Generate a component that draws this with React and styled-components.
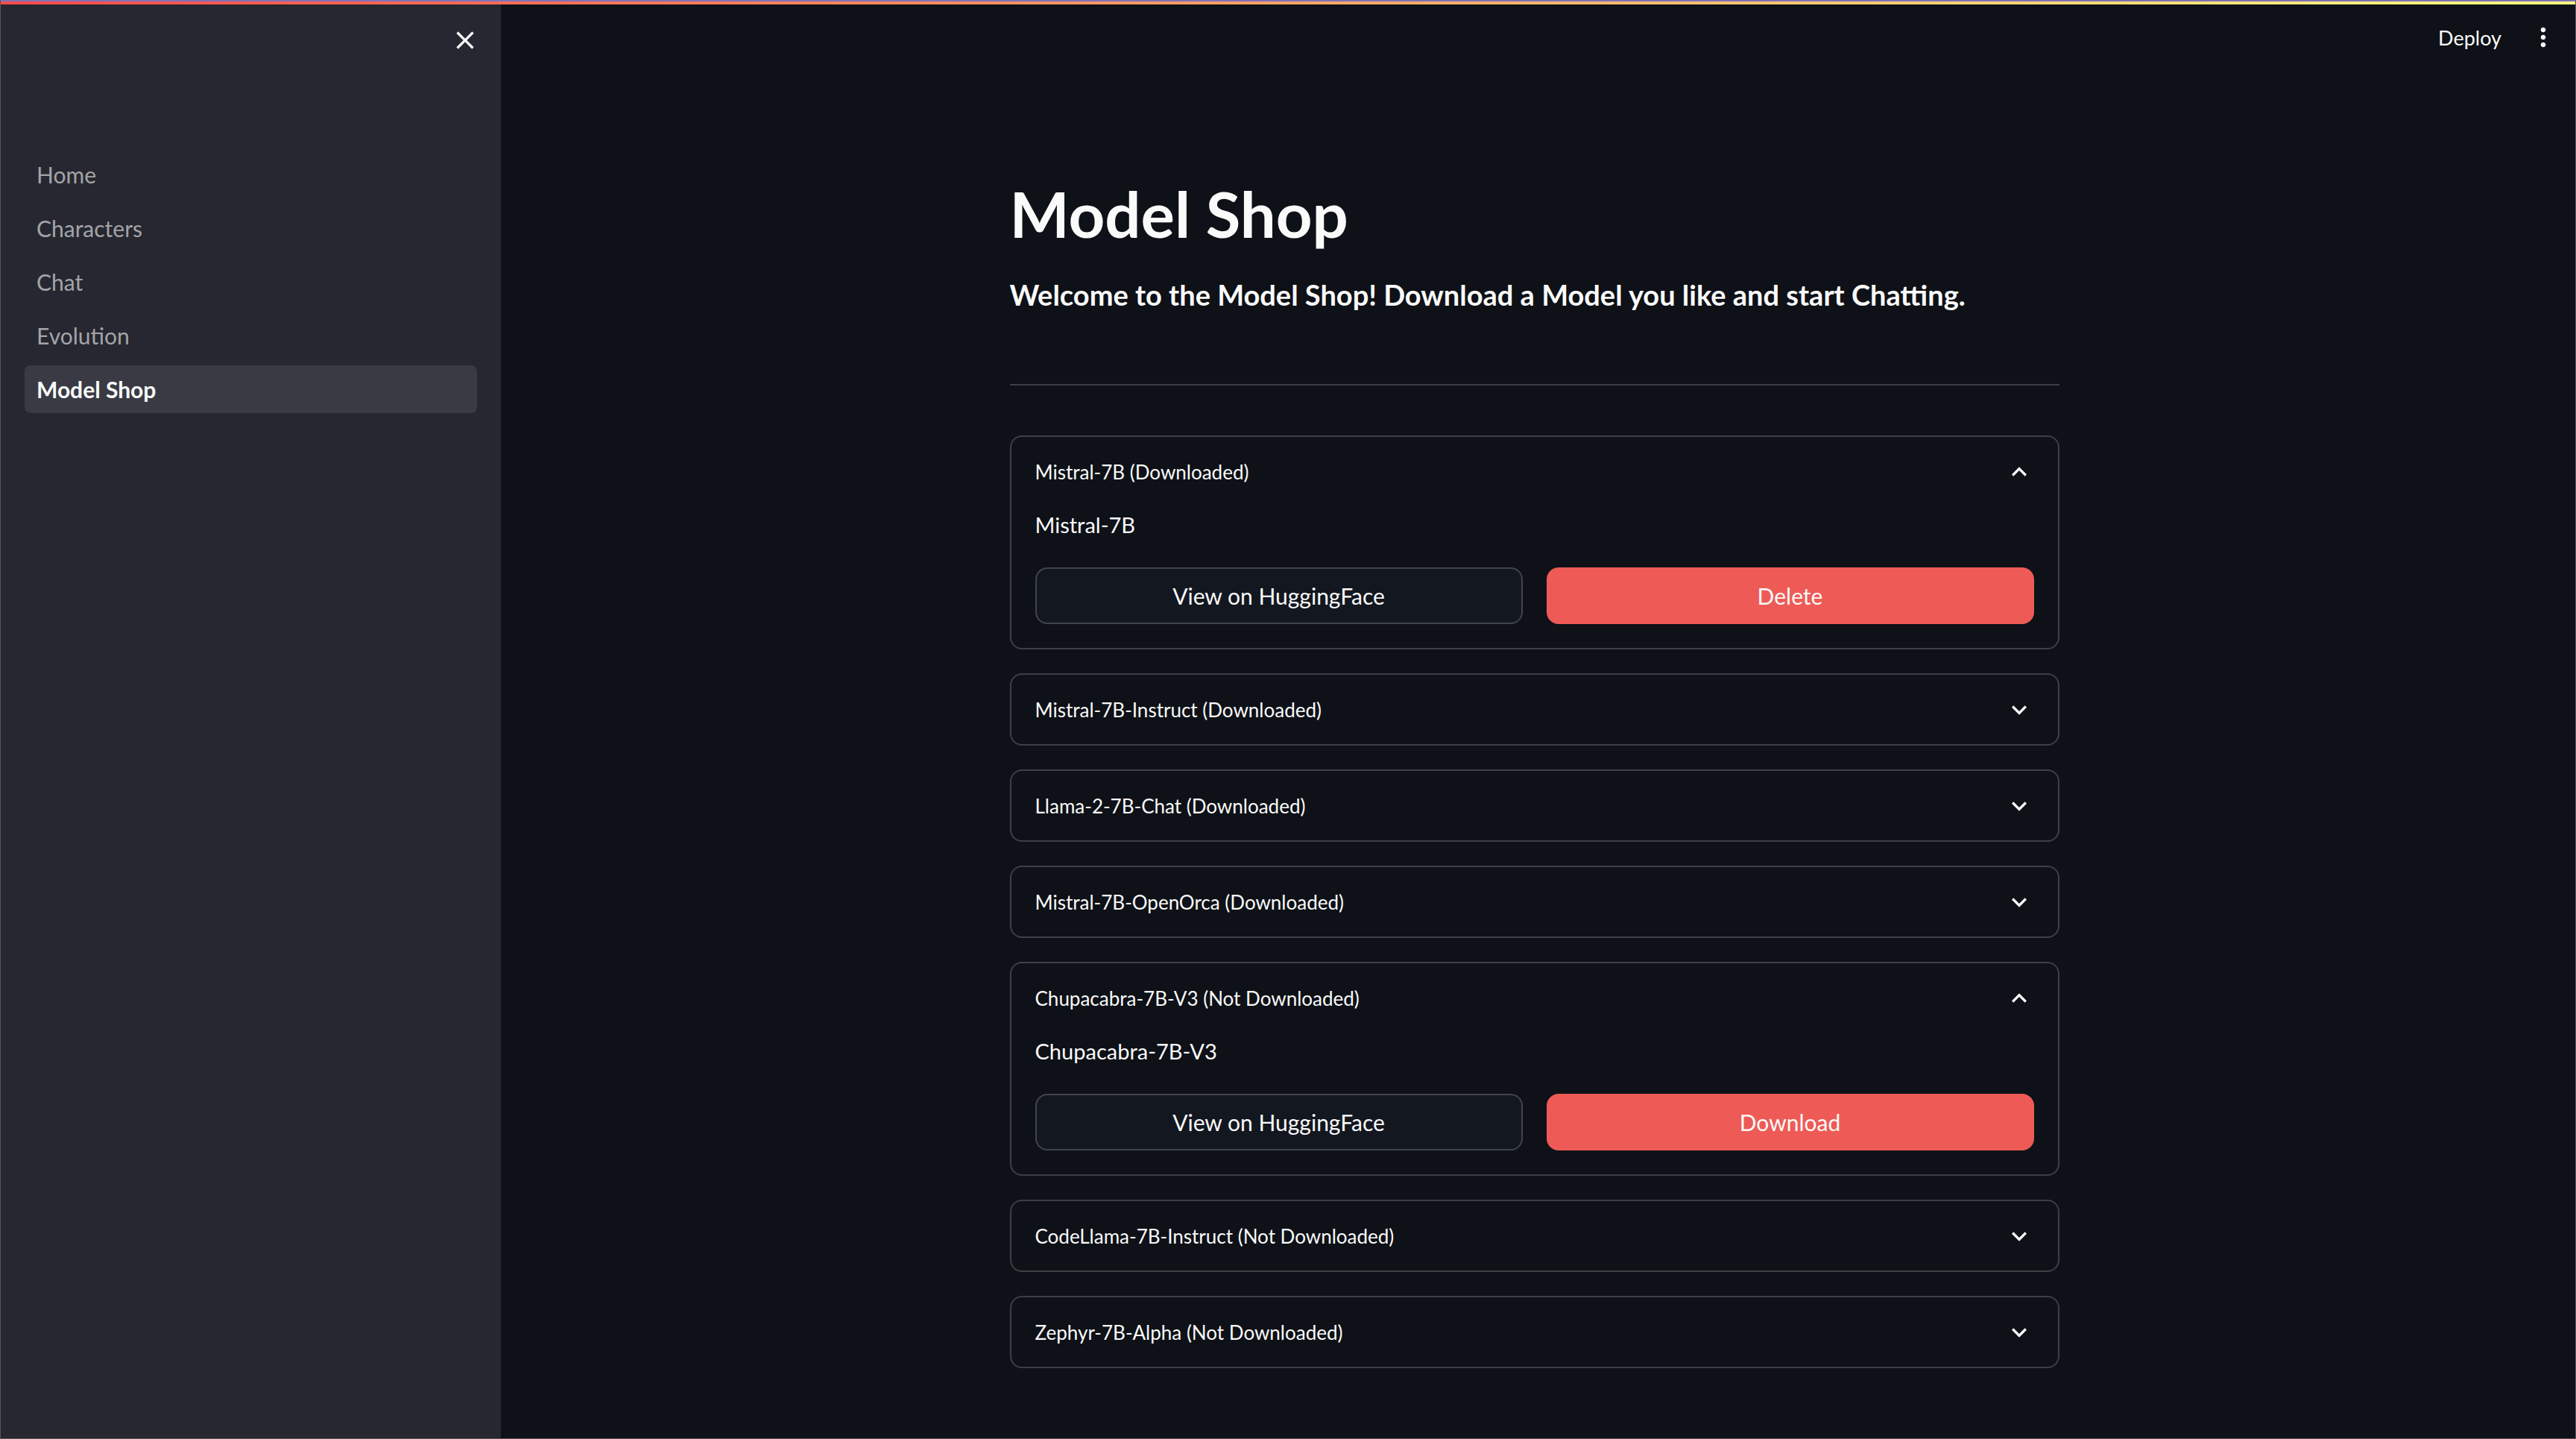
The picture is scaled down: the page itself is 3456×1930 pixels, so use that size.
import React from "react";
import styled, { createGlobalStyle } from "styled-components";

const Global = createGlobalStyle`
  html, body { margin: 0; padding: 0; background: #0e1117; }
  body { font-family: Lato, "Noto Sans", sans-serif; color: #fafafa; }
  * { box-sizing: border-box; }
  button { font-family: inherit; }
`;

const Frame = styled.div`
  height: 100vh;
  display: flex;
  flex-direction: column;
  overflow: hidden;
  border-left: 1px solid #55565c;
  border-right: 1px solid #55565c;
  border-bottom: 1px solid #55565c;
`;

const WindowEdge = styled.div`
  flex: none;
  height: 2px;
  background: #8072b8;
`;

const Decoration = styled.div`
  flex: none;
  height: 4px;
  background: linear-gradient(90deg, #ff4b4b, #fffd80);
`;

const Body = styled.div`
  flex: 1;
  min-height: 0;
  display: flex;
`;

const Sidebar = styled.aside`
  flex: none;
  width: 671px;
  background: #262730;
  display: flex;
  flex-direction: column;
`;

const SidebarHeader = styled.div`
  height: 95px;
  display: flex;
  justify-content: flex-end;
  align-items: center;
  padding-right: 28px;
`;

const IconButton = styled.button`
  width: 40px;
  height: 40px;
  padding: 0;
  border: none;
  background: transparent;
  color: #fafafa;
  display: flex;
  align-items: center;
  justify-content: center;
  cursor: pointer;
`;

const Nav = styled.nav`
  margin-top: 101px;
  padding: 0 32px;
  display: flex;
  flex-direction: column;
  gap: 8px;
`;

const NavItem = styled.a`
  height: 64px;
  display: flex;
  align-items: center;
  padding-left: 16px;
  border-radius: 8px;
  font-size: 30px;
  text-decoration: none;
  color: ${(p) => (p.$active ? "#fafafa" : "rgba(250,250,250,0.6)")};
  font-weight: ${(p) => (p.$active ? 700 : 400)};
  background: ${(p) => (p.$active ? "#393a44" : "transparent")};
`;

const Main = styled.main`
  flex: 1;
  min-width: 0;
  display: flex;
  flex-direction: column;
  overflow: hidden;
  padding-right: 10px;
`;

const TopBar = styled.header`
  flex: none;
  height: 88px;
  display: flex;
  justify-content: flex-end;
  align-items: center;
  margin-right: -10px;
  padding-right: 23px;
  gap: 20px;
`;

const DeployButton = styled.button`
  border: none;
  background: transparent;
  color: #fafafa;
  font-size: 27px;
  padding: 12px 16px;
  cursor: pointer;
`;

const Content = styled.div`
  width: 1408px;
  margin: 0 auto;
  padding-top: 142px;
`;

const Title = styled.h1`
  margin: 0;
  font-size: 85px;
  line-height: 100px;
  font-weight: 700;
`;

const Subtitle = styled.h5`
  margin: 35px 0 0;
  font-size: 38px;
  line-height: 48px;
  font-weight: 700;
`;

const Divider = styled.hr`
  margin: 96px 0 0;
  height: 2px;
  border: none;
  background: rgba(250, 250, 250, 0.2);
`;

const List = styled.div`
  margin-top: 67px;
  display: flex;
  flex-direction: column;
  gap: 32px;
`;

const Expander = styled.section`
  border: 2px solid rgba(250, 250, 250, 0.2);
  border-radius: 16px;
`;

const ExpanderHeader = styled.div`
  height: 93px;
  padding: 0 32px;
  display: flex;
  align-items: center;
  justify-content: space-between;
  font-size: 26px;
  color: #fafafa;
`;

const ExpanderBody = styled.div`
  padding: 0 32px 32px;
`;

const BodyText = styled.p`
  margin: 0;
  font-size: 29px;
  line-height: 50px;
`;

const ButtonRow = styled.div`
  margin-top: 32px;
  display: grid;
  grid-template-columns: 1fr 1fr;
  gap: 32px;
`;

const ActionButton = styled.button`
  height: 76px;
  border-radius: 16px;
  font-size: 30px;
  color: #fafafa;
  cursor: pointer;
  border: 2px solid ${(p) => (p.$primary ? "#ee5b56" : "rgba(250,250,250,0.2)")};
  background: ${(p) => (p.$primary ? "#ee5b56" : "#131720")};
`;

const CloseIcon = () => (
  <svg width="40" height="40" viewBox="0 0 24 24" fill="#fafafa">
    <path d="M19 6.41L17.59 5 12 10.59 6.41 5 5 6.41 10.59 12 5 17.59 6.41 19 12 13.41 17.59 19 19 17.59 13.41 12z" />
  </svg>
);

const MoreIcon = () => (
  <svg width="40" height="40" viewBox="0 0 24 24" fill="#fafafa">
    <path d="M12 8c1.1 0 2-.9 2-2s-.9-2-2-2-2 .9-2 2 .9 2 2 2zm0 2c-1.1 0-2 .9-2 2s.9 2 2 2 2-.9 2-2-.9-2-2-2zm0 6c-1.1 0-2 .9-2 2s.9 2 2 2 2-.9 2-2-.9-2-2-2z" />
  </svg>
);

const Chevron = ({ up }) => (
  <svg width="40" height="40" viewBox="0 0 24 24" fill="#fafafa">
    {up ? (
      <path d="M12 8l-6 6 1.41 1.41L12 10.83l4.59 4.58L18 14z" />
    ) : (
      <path d="M16.59 8.59L12 13.17 7.41 8.59 6 10l6 6 6-6z" />
    )}
  </svg>
);

const models = [
  { name: "Mistral-7B", downloaded: true, open: true },
  { name: "Mistral-7B-Instruct", downloaded: true },
  { name: "Llama-2-7B-Chat", downloaded: true },
  { name: "Mistral-7B-OpenOrca", downloaded: true },
  { name: "Chupacabra-7B-V3", downloaded: false, open: true },
  { name: "CodeLlama-7B-Instruct", downloaded: false },
  { name: "Zephyr-7B-Alpha", downloaded: false },
];

const pages = ["Home", "Characters", "Chat", "Evolution", "Model Shop"];

export default function App() {
  return (
    <>
      <Global />
      <Frame>
        <WindowEdge />
        <Decoration />
        <Body>
          <Sidebar>
            <SidebarHeader>
              <IconButton aria-label="Close sidebar">
                <CloseIcon />
              </IconButton>
            </SidebarHeader>
            <Nav>
              {pages.map((p) => (
                <NavItem key={p} $active={p === "Model Shop"}>
                  {p}
                </NavItem>
              ))}
            </Nav>
          </Sidebar>
          <Main>
            <TopBar>
              <DeployButton>Deploy</DeployButton>
              <IconButton aria-label="Menu">
                <MoreIcon />
              </IconButton>
            </TopBar>
            <Content>
              <Title>Model Shop</Title>
              <Subtitle>
                Welcome to the Model Shop! Download a Model you like and start Chatting.
              </Subtitle>
              <Divider />
              <List>
                {models.map((m) => (
                  <Expander key={m.name}>
                    <ExpanderHeader>
                      <span>
                        {m.name} ({m.downloaded ? "Downloaded" : "Not Downloaded"})
                      </span>
                      <Chevron up={m.open} />
                    </ExpanderHeader>
                    {m.open && (
                      <ExpanderBody>
                        <BodyText>{m.name}</BodyText>
                        <ButtonRow>
                          <ActionButton>View on HuggingFace</ActionButton>
                          <ActionButton $primary>
                            {m.downloaded ? "Delete" : "Download"}
                          </ActionButton>
                        </ButtonRow>
                      </ExpanderBody>
                    )}
                  </Expander>
                ))}
              </List>
            </Content>
          </Main>
        </Body>
      </Frame>
    </>
  );
}
